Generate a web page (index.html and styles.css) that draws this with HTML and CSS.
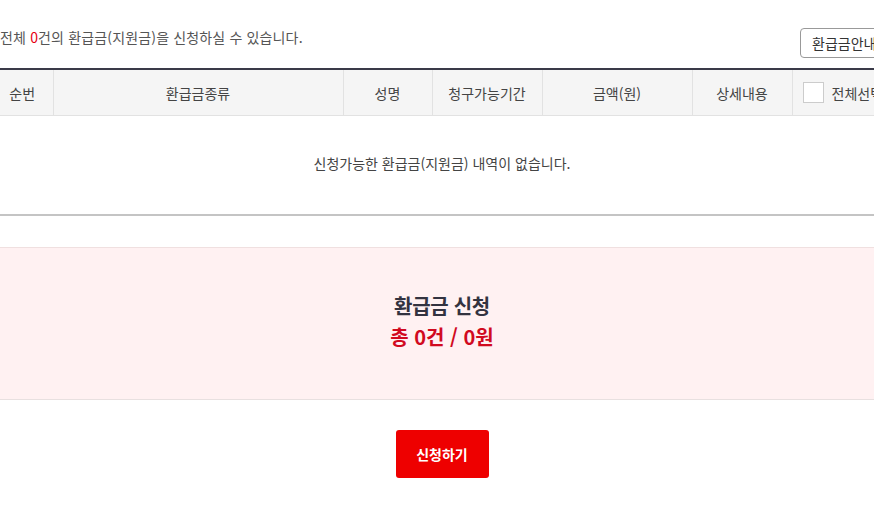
FILE: index.html
```html
<!DOCTYPE html>
<html lang="ko">
<head>
    <meta charset="UTF-8">
    <meta name="viewport" content="width=device-width, initial-scale=1.0">
    <title>환급금 신청</title>
    <link rel="stylesheet" href="styles.css">
</head>
<body>
    <div class="page">
        <div class="info-bar">
            <p class="count-text">전체 <em>0</em>건의 환급금(지원금)을 신청하실 수 있습니다.</p>
            <button class="guide-btn">환급금안내</button>
        </div>

        <table class="refund-table">
            <colgroup>
                <col style="width: 61px">
                <col style="width: 290px">
                <col style="width: 89px">
                <col style="width: 110px">
                <col style="width: 150px">
                <col style="width: 100px">
                <col>
            </colgroup>
            <thead>
                <tr>
                    <th>순번</th>
                    <th>환급금종류</th>
                    <th>성명</th>
                    <th>청구가능기간</th>
                    <th>금액(원)</th>
                    <th>상세내용</th>
                    <th class="check-col"><label><span class="check-box"></span>전체선택</label></th>
                </tr>
            </thead>
            <tbody>
                <tr>
                    <td colspan="7" class="empty">신청가능한 환급금(지원금) 내역이 없습니다.</td>
                </tr>
            </tbody>
        </table>

        <div class="summary">
            <h3>환급금 신청</h3>
            <p class="total">총 0건 / 0원</p>
        </div>

        <div class="actions">
            <button class="apply-btn">신청하기</button>
        </div>
    </div>
</body>
</html>
```

FILE: styles.css
```css
html, body {
    margin: 0;
    padding: 0;
    overflow: hidden;
    background: #fff;
    font-family: "Noto Sans CJK KR", "Noto Sans", sans-serif;
    color: #333;
}
.page {
    width: 900px;
    margin-left: -8px;
}
.info-bar {
    display: flex;
    justify-content: space-between;
    align-items: flex-end;
    height: 68px;
    padding-left: 8px;
    box-sizing: border-box;
}
.count-text {
    margin: 0 0 21px;
    font-size: 14px;
    line-height: 20px;
    color: #555;
    letter-spacing: 0.15px;
}
.count-text em {
    font-style: normal;
    color: #e60012;
}
.guide-btn {
    margin: 0 0 10px;
    width: 92px;
    height: 30px;
    border: 1px solid #999;
    border-radius: 4px;
    background: #fff;
    font-family: inherit;
    font-size: 14px;
    color: #333;
    text-align: left;
    padding-left: 11px;
    white-space: nowrap;
}
.refund-table {
    width: 100%;
    border-collapse: collapse;
    table-layout: fixed;
    border-top: 2px solid #3a3a48;
}
.refund-table th {
    height: 45px;
    padding: 0;
    background: #f5f5f5;
    border-left: 1px solid #e2e2e2;
    border-bottom: 1px solid #e2e2e2;
    font-size: 14px;
    font-weight: normal;
    color: #444;
}
.refund-table th:first-child {
    border-left: none;
}
.check-col label {
    display: flex;
    align-items: center;
    gap: 8px;
    padding-left: 10px;
    white-space: nowrap;
}
.check-box {
    width: 19px;
    height: 19px;
    border: 1px solid #ccc;
    background: #fff;
    flex: none;
}
.empty {
    height: 94px;
    text-align: center;
    font-size: 14px;
    color: #444;
    border-bottom: 2px solid #c4c4c4;
    padding: 0 0 4px;
}
.summary {
    margin-top: 31px;
    height: 153px;
    background: #fff1f2;
    border-top: 1px solid #f0e0e0;
    border-bottom: 1px solid #e8e0e0;
    display: flex;
    flex-direction: column;
    align-items: center;
    justify-content: center;
    padding-bottom: 6px;
    box-sizing: border-box;
}
.summary h3 {
    margin: 0;
    font-size: 20px;
    font-weight: bold;
    color: #333340;
    line-height: 31px;
    letter-spacing: -0.3px;
}
.total {
    margin: 0;
    font-size: 20px;
    font-weight: bold;
    color: #d10a1f;
    line-height: 31px;
    letter-spacing: 0;
}
.actions {
    display: flex;
    justify-content: center;
    padding-top: 30px;
}
.apply-btn {
    width: 93px;
    height: 48px;
    border: none;
    border-radius: 3px;
    background: #ee0000;
    color: #fff;
    font-family: inherit;
    font-size: 14px;
    font-weight: bold;
}
```
